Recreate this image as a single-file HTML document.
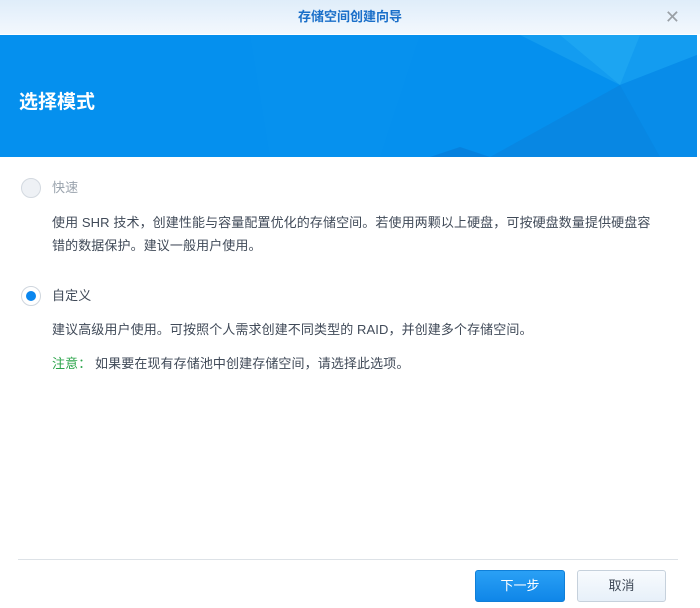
<!DOCTYPE html>
<html><head><meta charset="utf-8"><style>
*{margin:0;padding:0;box-sizing:border-box}
body{width:700px;height:608px;background:#fff;font-family:"Liberation Sans","Noto Sans CJK SC",sans-serif;position:relative;overflow:hidden;color:#404a58}
.tb{position:absolute;left:0;top:0;width:700px;height:34px;background:linear-gradient(#dfedfa,#f3f8fd);text-align:center;line-height:34px;font-size:13px;color:#1a6fc9;font-weight:bold}
.x{position:absolute;right:20px;top:0;color:#9aa0a6;font-size:18px;font-weight:normal;line-height:34px}
.ban{position:absolute;left:0;top:35px;width:697px;height:122px;background:#0590ee;overflow:hidden}
.ban h1{position:absolute;left:19px;top:52px;font-size:19px;color:#fff;font-weight:bold}
.t{position:absolute;font-size:13px;line-height:16px;white-space:nowrap;letter-spacing:0.1px}
.r{position:absolute;left:21px;width:20px;height:20px;border-radius:50%;border:1px solid #d3d9e0;background:#eef1f5}
.btn{position:absolute;top:570px;height:32px;border-radius:3px;font-size:13px;text-align:center;line-height:30px}
</style></head><body>
<div class="tb">存储空间创建向导<span class="x">✕</span></div>
<div class="ban">
<svg width="697" height="122" style="position:absolute;left:0;top:0">
<polygon points="250,0 420,0 380,122 270,122" fill="#0a96f0" opacity=".3"/>
<polygon points="520,0 697,0 697,20 620,50" fill="#22a8f2" opacity=".5"/>
<polygon points="620,50 697,20 697,122 660,122" fill="#0a8ae6" opacity=".6"/>
<polygon points="490,122 620,50 660,122" fill="#0a82dc" opacity=".6"/>
<polygon points="430,122 490,122 460,112" fill="#0678d4" opacity=".6"/>
<polygon points="560,0 640,0 620,50" fill="#2ab3f5" opacity=".4"/>
</svg>
<h1>选择模式</h1>
</div>
<div class="r" style="top:178px"></div>
<div class="t" style="left:52px;top:180px;color:#9aa3ad">快速</div>
<div class="t" style="left:52px;top:215px">使用 SHR 技术，创建性能与容量配置优化的存储空间。若使用两颗以上硬盘，可按硬盘数量提供硬盘容</div>
<div class="t" style="left:52px;top:238px">错的数据保护。建议一般用户使用。</div>
<div class="r" style="top:286px;background:#fff;border-color:#cfd6de"><div style="position:absolute;left:4px;top:4px;width:10px;height:10px;border-radius:50%;background:#0a86ee"></div></div>
<div class="t" style="left:52px;top:288px">自定义</div>
<div class="t" style="left:52px;top:322px">建议高级用户使用。可按照个人需求创建不同类型的 RAID，并创建多个存储空间。</div>
<div class="t" style="left:52px;top:356px"><span style="color:#2ba44a">注意：</span> 如果要在现有存储池中创建存储空间，请选择此选项。</div>
<div style="position:absolute;left:18px;top:559px;width:660px;height:1px;background:#dde2e7"></div>
<div class="btn" style="left:475px;width:90px;background:linear-gradient(#2aa0f5,#0f86e8);border:1px solid #0f7fd8;color:#fff">下一步</div>
<div class="btn" style="left:577px;width:89px;background:linear-gradient(#f8fbfe,#e7f0f9);border:1px solid #c6d1dc;color:#404a58">取消</div>
</body></html>
